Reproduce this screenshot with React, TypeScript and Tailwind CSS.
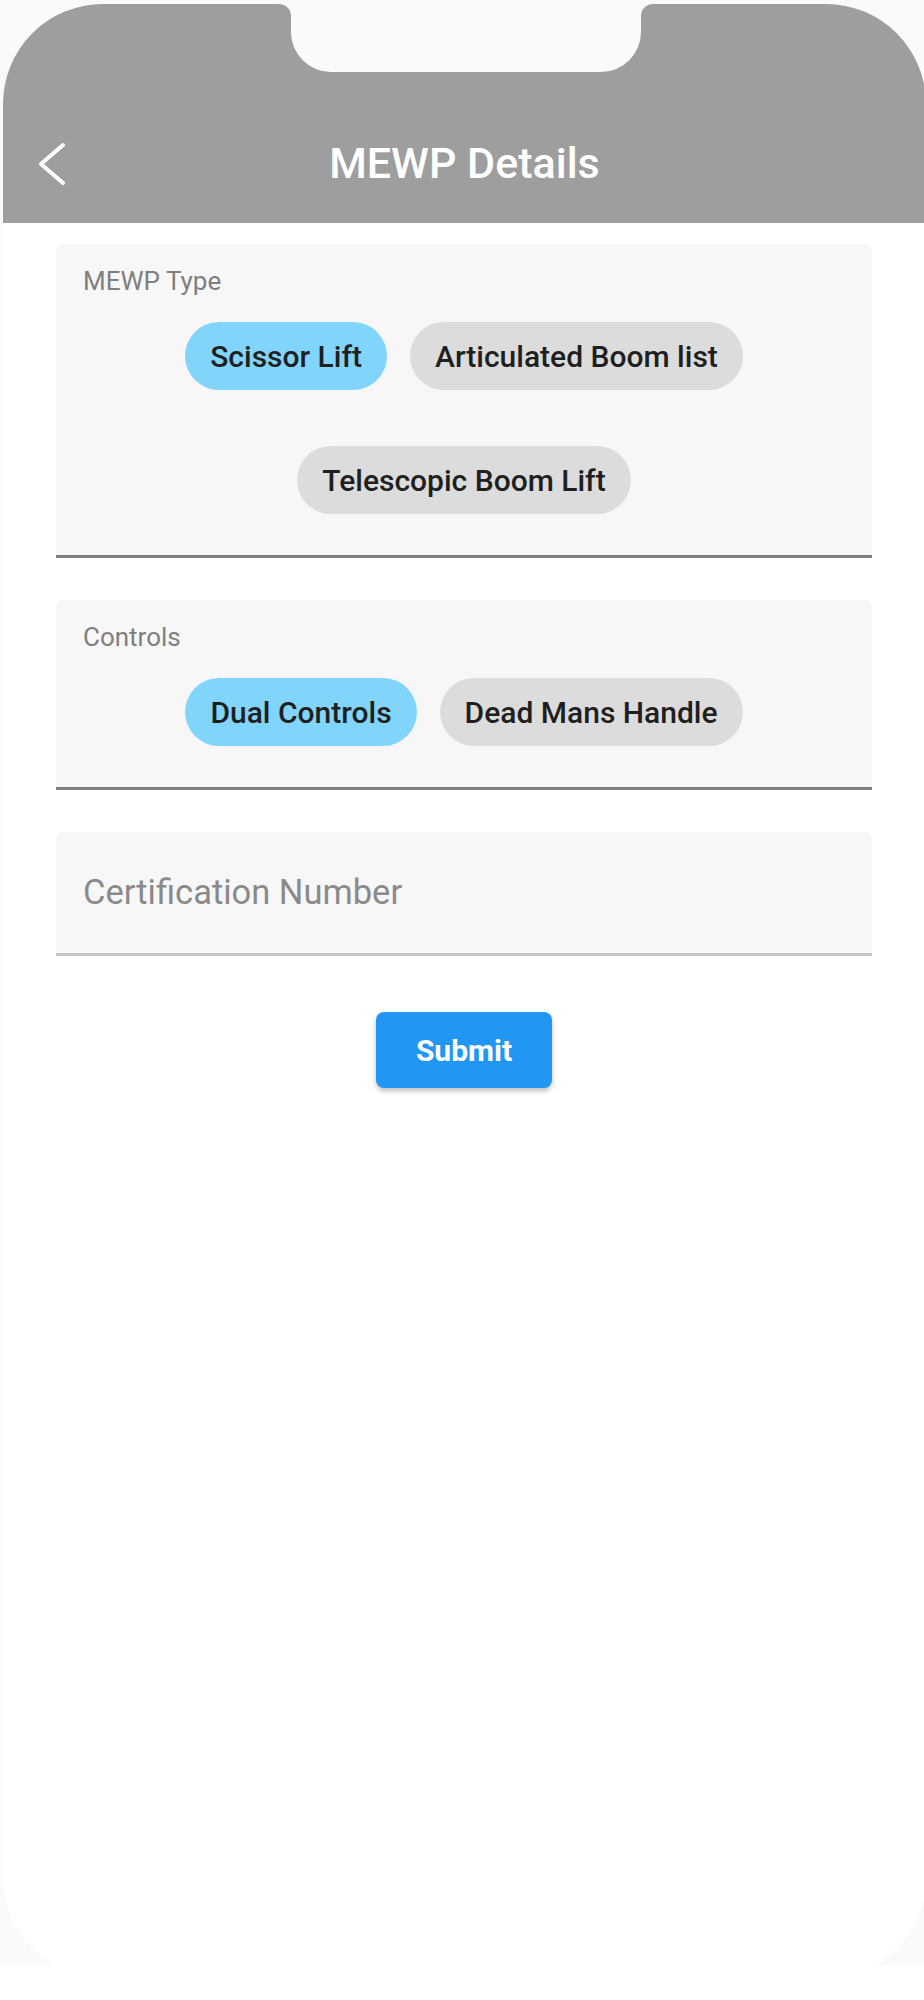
import { ReactNode } from "react";

interface ChipProps {
  label: string;
  selected?: boolean;
}

function Chip({ label, selected }: ChipProps) {
  return (
    <div
      className={`h-[68px] px-[25px] rounded-full flex items-center text-[30px] font-medium text-[#1f1f1f] whitespace-nowrap ${
        selected ? "bg-[#81d4fa]" : "bg-[#dcdcdc]"
      }`}
    >
      {label}
    </div>
  );
}

function Section({ title, children }: { title: string; children: ReactNode }) {
  return (
    <div className="bg-[#f7f7f7] rounded-t-[8px] border-b-[3px] border-[#7f7f7f] pt-[22px] pb-[41px]">
      <div className="px-[27px] text-[26px] leading-[30px] text-[#7f7f7f]">{title}</div>
      <div className="mt-[26px] flex flex-wrap justify-center gap-x-[23px] gap-y-[56px]">
        {children}
      </div>
    </div>
  );
}

export default function App() {
  return (
    <div
      className="w-[924px] h-[2000px] overflow-hidden bg-white"
      style={{ fontFamily: "Roboto, 'Noto Sans', sans-serif" }}
    >
      <div className="h-[1965px] overflow-hidden bg-[#fafafa] pl-[3px] pt-[4px]">
        <div className="relative w-[923px] h-[1974px] bg-white rounded-[100px] overflow-hidden">
          {/* header */}
          <div className="h-[219px] bg-[#9e9e9e] flex flex-col justify-end">
            <div className="relative h-[119px] flex items-center justify-center">
              <svg
                className="absolute left-[33px] top-[37px]"
                width="34"
                height="46"
                viewBox="0 0 34 46"
                fill="none"
              >
                <polyline
                  points="27,4 5,23 27,42"
                  stroke="white"
                  strokeWidth="4"
                  strokeLinecap="round"
                  strokeLinejoin="round"
                />
              </svg>
              <span className="text-[43px] font-medium text-white">MEWP Details</span>
            </div>
          </div>

          {/* notch */}
          <div className="absolute top-0 left-[288px] w-[350px] h-[68px] bg-[#fafafa] rounded-b-[40px]" />
          <div className="absolute top-0 left-[276px] w-[12px] h-[12px] bg-[#fafafa]">
            <div className="w-full h-full bg-[#9e9e9e] rounded-tr-[12px]" />
          </div>
          <div className="absolute top-0 left-[638px] w-[12px] h-[12px] bg-[#fafafa]">
            <div className="w-full h-full bg-[#9e9e9e] rounded-tl-[12px]" />
          </div>

          {/* body */}
          <div className="pl-[53px] pr-[54px] pt-[21px] flex flex-col">
            <Section title="MEWP Type">
              <Chip label="Scissor Lift" selected />
              <Chip label="Articulated Boom list" />
              <Chip label="Telescopic Boom Lift" />
            </Section>

            <div className="mt-[42px]">
              <Section title="Controls">
                <Chip label="Dual Controls" selected />
                <Chip label="Dead Mans Handle" />
              </Section>
            </div>

            <div className="mt-[42px] bg-[#f7f7f7] rounded-t-[8px] border-b-[3px] border-[#c8c8c8] pt-[40px] pb-[41px] px-[27px]">
              <div className="text-[34.5px] leading-[40px] text-[#8a8a8a]">Certification Number</div>
            </div>

            <div className="mt-[56px] flex justify-center">
              <button className="w-[176px] h-[76px] rounded-[8px] bg-[#2196f3] text-white text-[30px] font-bold shadow-[0_3px_5px_rgba(0,0,0,0.25)]">
                Submit
              </button>
            </div>
          </div>
        </div>
      </div>
    </div>
  );
}
